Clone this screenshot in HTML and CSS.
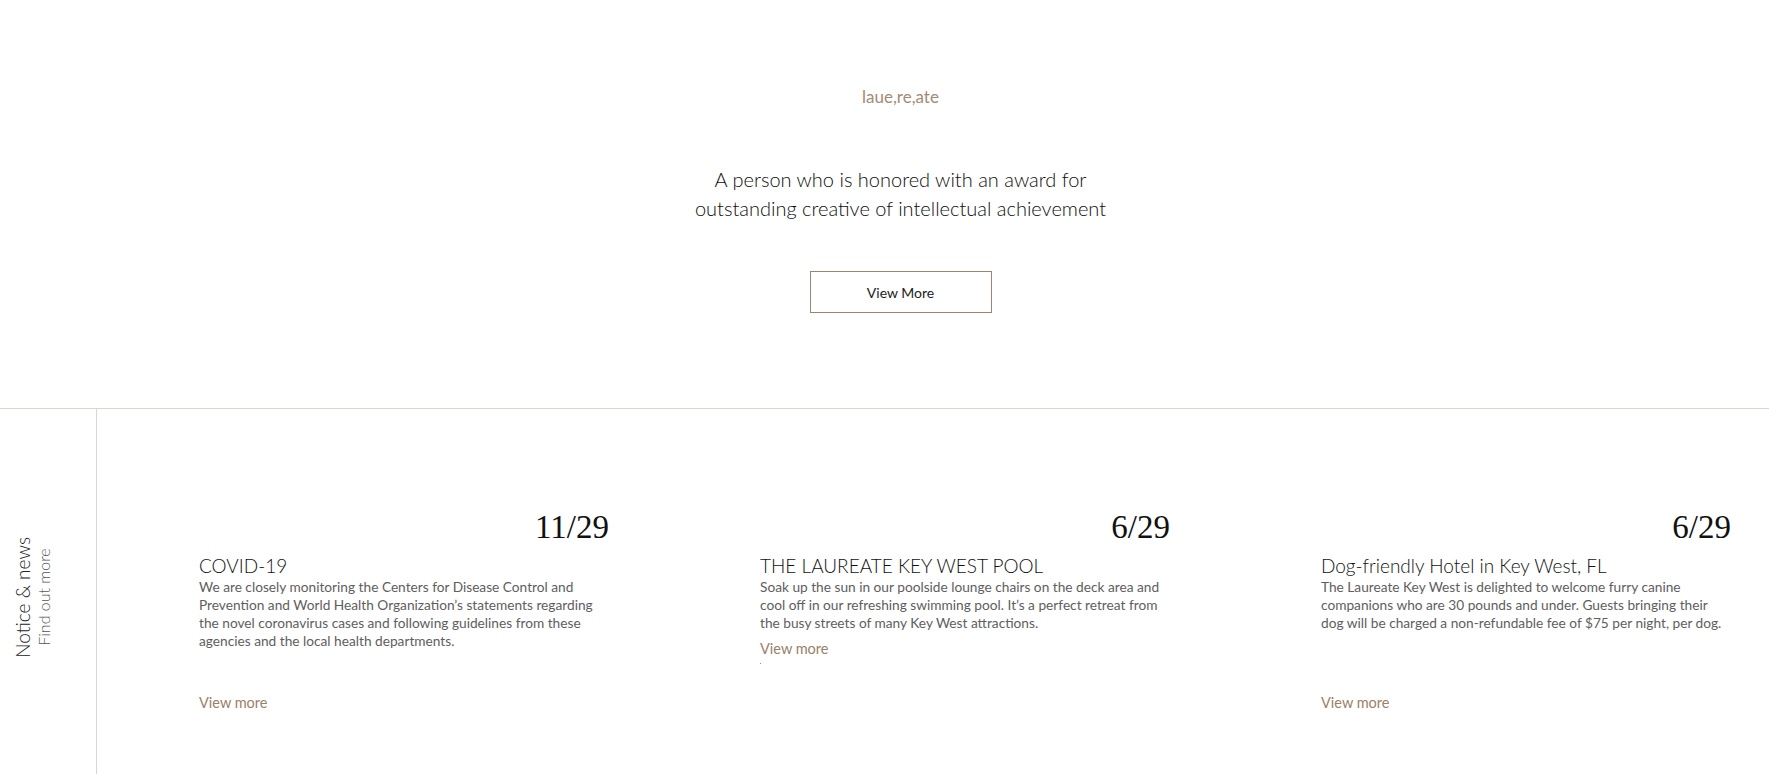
FILE: index.html
```html
<!DOCTYPE html>
<html lang="en">
<head>
<meta charset="utf-8">
<title>The Laureate</title>
<link rel="stylesheet" href="styles.css">
</head>
<body>
<section class="intro">
  <p class="intro-label">laue,re,ate</p>
  <p class="intro-text">A person who is honored with an award for<br>outstanding creative of intellectual achievement</p>
  <a class="btn-outline" href="#">View More</a>
</section>
<section class="news">
  <aside class="news-side">
    <div class="side-text">
      <span class="side-title">Notice &amp; news</span>
      <span class="side-sub">Find out more</span>
    </div>
  </aside>
  <div class="news-grid">
    <article class="news-item">
      <div class="news-date">11/29</div>
      <h3 class="news-title">COVID-19</h3>
      <p class="news-body news-body--fixed">We are closely monitoring the Centers for Disease Control and Prevention and World Health Organization’s statements regarding the novel coronavirus cases and following guidelines from these agencies and the local health departments.</p>
      <a class="news-link" href="#">View more</a>
    </article>
    <article class="news-item">
      <div class="news-date">6/29</div>
      <h3 class="news-title">THE LAUREATE KEY WEST POOL</h3>
      <p class="news-body">Soak up the sun in our poolside lounge chairs on the deck area and cool off in our refreshing swimming pool. It’s a perfect retreat from the busy streets of many Key West attractions.</p>
      <a class="news-link" href="#">View more</a>
      <span class="news-dot"></span>
    </article>
    <article class="news-item">
      <div class="news-date">6/29</div>
      <h3 class="news-title">Dog-friendly Hotel in Key West, FL</h3>
      <p class="news-body news-body--fixed">The Laureate Key West is delighted to welcome furry canine companions who are 30 pounds and under. Guests bringing their dog will be charged a non-refundable fee of $75 per night, per dog.</p>
      <a class="news-link" href="#">View more</a>
    </article>
  </div>
</section>
</body>
</html>
```
FILE: styles.css
```css
* { box-sizing: border-box; }

html, body {
  margin: 0;
  padding: 0;
  background: #ffffff;
}

body {
  font-family: "Lato", "Open Sans", sans-serif;
  color: #222222;
  overflow: hidden;
}

.intro {
  display: flex;
  flex-direction: column;
  align-items: center;
  padding: 85px 0 95px 32px;
  border-bottom: 1px solid #dcd6cf;
}

.intro-label {
  margin: 0;
  font-size: 17px;
  line-height: 24px;
  color: #a38b76;
}

.intro-text {
  margin: 56px 0 0;
  font-size: 20px;
  line-height: 29px;
  font-weight: 300;
  text-align: center;
  color: #0e0e0e;
}

.btn-outline {
  margin-top: 48px;
  width: 182px;
  height: 42px;
  display: flex;
  align-items: center;
  justify-content: center;
  border: 1px solid #9c8670;
  font-size: 14px;
  color: #222222;
  text-decoration: none;
}

.news {
  display: flex;
  height: 376px;
}

.news-side {
  width: 97px;
  flex: none;
  border-right: 1px solid #dcd6cf;
  display: flex;
  align-items: center;
  padding-left: 12px;
}

.side-text {
  writing-mode: vertical-rl;
  transform: rotate(180deg);
  display: flex;
  flex-direction: column;
  align-items: center;
  text-align: center;
}

.side-title {
  font-size: 19px;
  line-height: 22px;
  font-weight: 300;
  color: #222222;
}

.side-sub {
  font-size: 16px;
  line-height: 19px;
  font-weight: 300;
  color: #555555;
}

.news-grid {
  flex: 1;
  display: grid;
  grid-template-columns: repeat(3, 410px);
  column-gap: 151px;
  padding: 99px 37px 0 102px;
  align-items: start;
}

.news-item {
  display: flex;
  flex-direction: column;
  align-items: flex-start;
}

.news-date {
  align-self: flex-end;
  font-family: "Liberation Serif", "Times New Roman", serif;
  font-size: 33px;
  line-height: 38px;
  color: #111111;
}

.news-title {
  margin: 8px 0 0;
  font-size: 19px;
  line-height: 24px;
  font-weight: 300;
  color: #111111;
}

.news-body {
  margin: 0;
  max-width: 401px;
  font-size: 13.7px;
  line-height: 18px;
  color: #5e5e5e;
}

.news-body--fixed {
  min-height: 115px;
}

.news-link {
  margin-top: 7px;
  font-size: 14.5px;
  line-height: 20px;
  color: #9b8068;
  text-decoration: none;
}

.news-body--fixed + .news-link {
  margin-top: 0;
}

.news-dot {
  width: 1px;
  height: 1px;
  margin-top: 4px;
  background: #9b8f85;
}
```
